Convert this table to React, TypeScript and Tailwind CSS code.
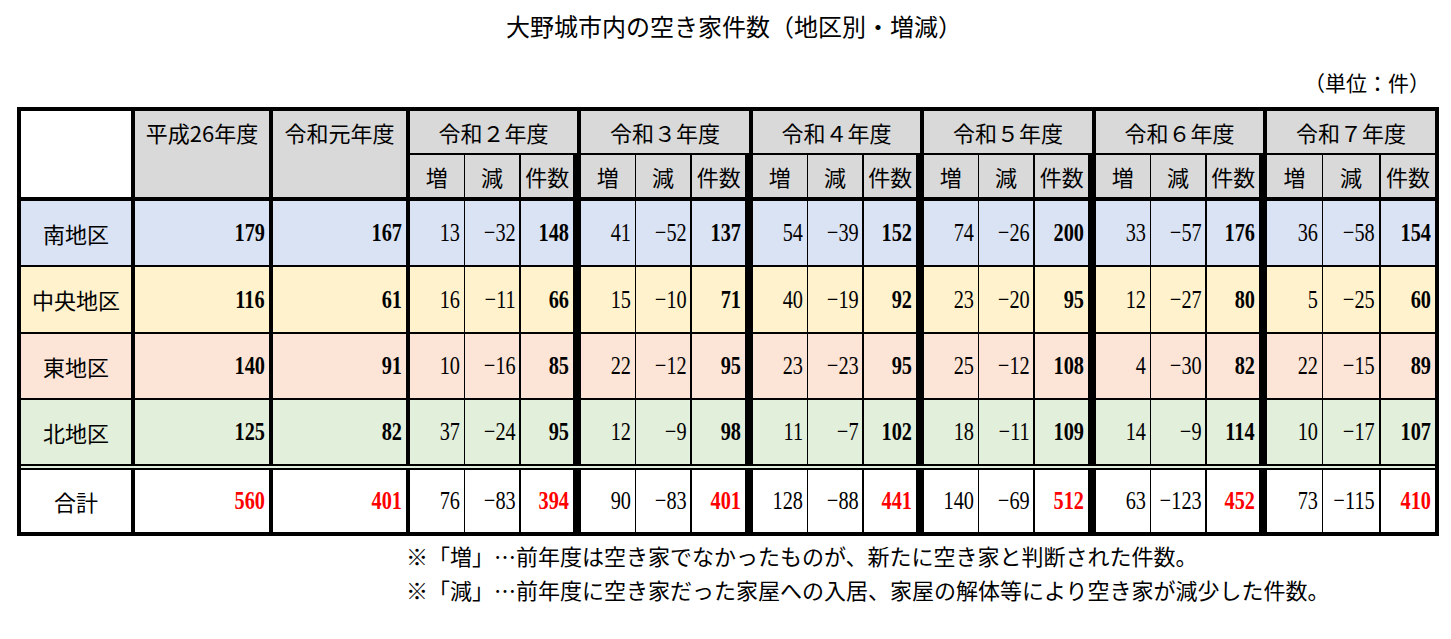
import React from "react";

type Row = {
  name: string;
  bg: string;
  total?: boolean;
  a: number;
  b: number;
  g: number[][];
  h: string;
};

const rows: Row[] = [
  { name: "南地区", bg: "bg-[#dae3f3]", h: "h-[66px] border-b-2 border-black", a: 179, b: 167, g: [[13, -32, 148], [41, -52, 137], [54, -39, 152], [74, -26, 200], [33, -57, 176], [36, -58, 154]] },
  { name: "中央地区", bg: "bg-[#fff2cc]", h: "h-[67px] border-b-2 border-black", a: 116, b: 61, g: [[16, -11, 66], [15, -10, 71], [40, -19, 92], [23, -20, 95], [12, -27, 80], [5, -25, 60]] },
  { name: "東地区", bg: "bg-[#fce4d6]", h: "h-[66px] border-b-2 border-black", a: 140, b: 91, g: [[10, -16, 85], [22, -12, 95], [23, -23, 95], [25, -12, 108], [4, -30, 82], [22, -15, 89]] },
  { name: "北地区", bg: "bg-[#e2efda]", h: "h-[70px] border-b-[6px] border-double border-black", a: 125, b: 82, g: [[37, -24, 95], [12, -9, 98], [11, -7, 102], [18, -11, 109], [14, -9, 114], [10, -17, 107]] },
  { name: "合計", bg: "bg-white", total: true, h: "h-[62px]", a: 560, b: 401, g: [[76, -83, 394], [90, -83, 401], [128, -88, 441], [140, -69, 512], [63, -123, 452], [73, -115, 410]] },
];

const years = ["令和２年度", "令和３年度", "令和４年度", "令和５年度", "令和６年度", "令和７年度"];
const groupW = ["w-[171px] border-r-4", "w-[172px] border-r-4", "w-[171px] border-r-4", "w-[172px] border-r-4", "w-[171px] border-r-4", "w-[168px]"];
const sub3 = ["w-[57px] border-r-4", "w-[58px] border-r-4", "w-[57px] border-r-4", "w-[58px] border-r-4", "w-[57px] border-r-4", "w-[54px]"];

const jp = "font-['Noto_Sans_CJK_JP',sans-serif]";

function fmt(n: number) {
  return n < 0 ? "\u2212" + Math.abs(n) : String(n);
}

function Num({ v, bold, red, cls }: { v: number; bold?: boolean; red?: boolean; cls: string }) {
  return (
    <div className={`${cls} border-black h-full flex items-center justify-end pr-[4px] overflow-hidden`}>
      <span
        className={`inline-block origin-right scale-x-[0.78] font-['Liberation_Serif',serif] text-[26px] leading-none ${bold ? "font-bold" : "font-normal"} ${red ? "text-[#ff0000]" : "text-black"}`}
      >
        {fmt(v)}
      </span>
    </div>
  );
}

export default function App() {
  return (
    <div className={`w-[1451px] h-[639px] bg-white text-black ${jp} overflow-hidden`}>
      <div className="ml-[17px] w-[1422px]">
        <h1 className="text-center text-[24px] leading-[30px] pt-[11px] pl-[12px] font-normal">
          大野城市内の空き家件数（地区別・増減）
        </h1>
        <div className="text-right text-[21px] leading-[26px] mt-[28px] pr-[9px]">（単位：件）</div>
        <div className="mt-[12px] border-4 border-black">
          {/* header */}
          <div className="flex h-[90px] border-b-4 border-black">
            <div className="w-[114px] border-r-4 border-black bg-white" />
            <div className="w-[138px] border-r-4 border-black bg-[#d9d9d9]">
              <div className="h-[42px] flex items-center justify-center text-[22px]">平成26年度</div>
            </div>
            <div className="w-[137px] border-r-4 border-black bg-[#d9d9d9]">
              <div className="h-[42px] flex items-center justify-center text-[22px]">令和元年度</div>
            </div>
            {years.map((y, i) => (
              <div key={y} className={`${groupW[i]} border-black bg-[#d9d9d9] flex flex-col`}>
                <div className="h-[44px] border-b-2 border-black flex items-center justify-center text-[22px]">{y}</div>
                <div className="flex h-[42px] text-[22px]">
                  <div className="w-[56px] border-r border-black flex items-center justify-center">増</div>
                  <div className="w-[58px] border-r-2 border-black flex items-center justify-center">減</div>
                  <div className={`${sub3[i]} border-black flex items-center justify-center`}>件数</div>
                </div>
              </div>
            ))}
          </div>
          {/* body */}
          {rows.map((r) => (
            <div key={r.name} className={`flex ${r.h} ${r.bg}`}>
              <div className="w-[114px] border-r-4 border-black h-full flex items-center justify-center text-[22px]">
                {r.name}
              </div>
              <Num v={r.a} bold red={r.total} cls="w-[138px] border-r-4" />
              <Num v={r.b} bold red={r.total} cls="w-[137px] border-r-4" />
              {r.g.map((g, i) => (
                <div key={i} className={`${groupW[i]} border-black h-full flex`}>
                  <Num v={g[0]} cls="w-[56px] border-r" />
                  <Num v={g[1]} cls="w-[58px] border-r-2" />
                  <Num v={g[2]} bold red={r.total} cls={sub3[i]} />
                </div>
              ))}
            </div>
          ))}
        </div>
        <div className="pl-[389px] mt-[1px] text-[22px] leading-[36px]">
          <p>※「増」…前年度は空き家でなかったものが、新たに空き家と判断された件数。</p>
          <p className="-mt-[2px]">※「減」…前年度に空き家だった家屋への入居、家屋の解体等により空き家が減少した件数。</p>
        </div>
      </div>
    </div>
  );
}
